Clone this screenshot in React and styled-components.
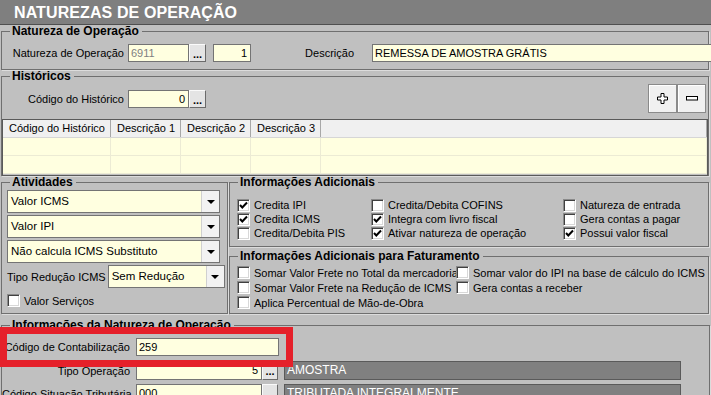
import React from "react";
import styled, { createGlobalStyle } from "styled-components";

const GlobalStyle = createGlobalStyle`
  html, body {
    margin: 0;
    padding: 0;
    background: #c0c0c0;
  }
  body {
    font-family: "Liberation Sans", Arial, sans-serif;
    font-size: 11px;
    color: #000;
  }
`;

const Window = styled.div`
  position: relative;
  width: 711px;
  height: 395px;
  overflow: hidden;
  background: #c0c0c0;
`;

const TitleBar = styled.div`
  height: 24px;
  background: #7f7f7f;
  border-bottom: 1px solid #4f4f4f;
  color: #fff;
  font-weight: bold;
  font-size: 16px;
  line-height: 25px;
  padding-left: 14px;
  letter-spacing: 0.1px;
`;

const Group = styled.fieldset`
  margin: ${(p) => p.$mt ?? 0}px ${(p) => p.$mr ?? 2}px 0 ${(p) => p.$ml ?? 1}px;
  padding: ${(p) => p.$pad || "0"};
  border: 1px solid #6f6f6f;
  border-bottom: ${(p) => (p.$noBottom ? "0" : "1px solid #6f6f6f")};
  box-shadow: 1px 1px 0 #dcdcdc;
  min-width: 0;
  width: ${(p) => (p.$w ? `${p.$w}px` : "auto")};
  flex-shrink: 0;
  height: ${(p) => (p.$h ? `${p.$h}px` : "auto")};
  box-sizing: border-box;
`;

const Legend = styled.legend`
  font-weight: bold;
  font-size: 12px;
  line-height: 12px;
  padding: 0 3px 0 2px;
  margin-left: ${(p) => p.$off ?? 8}px;
`;

const Row = styled.div`
  display: flex;
  align-items: center;
  margin-top: ${(p) => p.$mt ?? 0}px;
`;

const ButtonPair = styled.div`
  display: flex;
  margin-left: auto;
  margin-right: 2px;
`;

const Label = styled.span`
  flex-shrink: 0;
  width: ${(p) => (p.$w ? `${p.$w}px` : "auto")};
  text-align: right;
  margin-right: ${(p) => p.$mr ?? 4}px;
  white-space: nowrap;
`;

const Input = styled.div`
  flex-shrink: 0;
  box-sizing: border-box;
  width: ${(p) => p.$w}px;
  height: ${(p) => p.$h ?? 18}px;
  background: #ffffe0;
  border: 1px solid #747474;
  line-height: ${(p) => (p.$h ?? 18) - 2}px;
  padding: 0 3px 0 2px;
  text-align: ${(p) => (p.$right ? "right" : "left")};
  color: ${(p) => (p.$dim ? "#808080" : "#000")};
  white-space: nowrap;
  overflow: hidden;
  margin-right: ${(p) => p.$mr ?? 0}px;
`;

const DotsButton = styled.div`
  flex-shrink: 0;
  box-sizing: border-box;
  width: ${(p) => p.$w ?? 17}px;
  height: ${(p) => p.$h ?? 18}px;
  background: #e4e4e4;
  border: 1px solid;
  border-color: #fafafa #6a6a6a #6a6a6a #fafafa;
  font-weight: bold;
  font-size: 11px;
  line-height: 18px;
  text-align: center;
  margin-right: ${(p) => p.$mr ?? 0}px;
`;

const DarkField = styled.div`
  flex-shrink: 0;
  box-sizing: border-box;
  width: ${(p) => p.$w}px;
  height: 19px;
  background: #808080;
  border: 1px solid #5a5a5a;
  color: #fff;
  font-size: 12px;
  line-height: 17px;
  padding-left: 2px;
  white-space: nowrap;
`;

const SquareButton = styled.div`
  box-sizing: border-box;
  width: 29px;
  height: 29px;
  background: #f0f0f0;
  border: 1px solid #8a8a8a;
  box-shadow: inset 1px 1px 0 #ffffff;
  display: flex;
  align-items: center;
  justify-content: center;
`;

const Grid = styled.div`
  box-sizing: border-box;
  height: 57px;
  margin-top: 6px;
  border: 1px solid #5a5a5a;
  background: #c0c0c0;
  overflow: hidden;
`;

const GridRow = styled.div`
  display: flex;
  height: 17px;
  background: ${(p) => (p.$head ? "#f0f0f0" : "#ffffe0")};
  border-bottom: 1px solid ${(p) => (p.$head ? "#d6d6d6" : "#ecebd4")};
`;

const GridCell = styled.div`
  box-sizing: border-box;
  width: ${(p) => (p.$w ? `${p.$w}px` : "auto")};
  flex: ${(p) => (p.$w ? "0 0 auto" : "1")};
  border-right: 1px solid ${(p) => (p.$head ? "#a8a8a8" : "#ecebd4")};
  padding-left: 6px;
  line-height: 17px;
  white-space: nowrap;
`;

const Columns = styled.div`
  display: flex;
`;

const RightStack = styled.div`
  flex: 1;
  display: flex;
  flex-direction: column;
`;

const Combo = styled.div`
  box-sizing: border-box;
  display: flex;
  width: ${(p) => p.$w}px;
  height: 23px;
  background: #ffffe0;
  border: 1px solid #747474;
  margin-top: ${(p) => p.$mt ?? 0}px;
  flex-shrink: 0;
`;

const ComboText = styled.div`
  flex: 1;
  font-size: 11.5px;
  line-height: 21px;
  padding-left: 3px;
  white-space: nowrap;
`;

const ComboArrow = styled.div`
  width: 17px;
  background: #f2f2f2;
  border-left: 1px solid #d0d0d0;
  display: flex;
  align-items: center;
  justify-content: center;
  &::after {
    content: "";
    border-left: 4px solid transparent;
    border-right: 4px solid transparent;
    border-top: 4px solid #000;
  }
`;

const CheckGrid = styled.div`
  display: grid;
  grid-template-columns: ${(p) => p.$cols};
  grid-auto-rows: ${(p) => p.$rh}px;
`;

const CheckItem = styled.label`
  display: flex;
  align-items: center;
  gap: 4px;
  white-space: nowrap;
  font-size: 11px;
`;

const Box = styled.span`
  box-sizing: border-box;
  width: 13px;
  height: 13px;
  flex-shrink: 0;
  background: #fff;
  border: 1px solid;
  border-color: #8a8a8a #ffffff #ffffff #8a8a8a;
  box-shadow: inset 1px 1px 0 #404040, inset -1px -1px 0 #d8d8d8;
  display: flex;
  align-items: center;
  justify-content: center;
`;

const Highlight = styled.div`
  position: absolute;
  left: 0;
  top: 327px;
  width: 293px;
  height: 40px;
  box-sizing: border-box;
  border: 7px solid #e5202a;
  pointer-events: none;
`;

const Check = ({ on, children }) => (
  <CheckItem>
    <Box>
      {on && (
        <svg width="9" height="9" viewBox="0 0 9 9">
          <path d="M1 4 L3.3 6.5 L8 1.5" fill="none" stroke="#000" strokeWidth="2" />
        </svg>
      )}
    </Box>
    {children}
  </CheckItem>
);

const Select = ({ w, mt, children }) => (
  <Combo $w={w} $mt={mt}>
    <ComboText>{children}</ComboText>
    <ComboArrow />
  </Combo>
);

export default function App() {
  return (
    <>
      <GlobalStyle />
      <Window>
        <TitleBar>NATUREZAS DE OPERAÇÃO</TitleBar>

        <Group $pad="7px 0 7px 0">
          <Legend>Natureza de Operação</Legend>
          <Row>
            <Label $w={122}>Natureza de Operação</Label>
            <Input $w={61} $dim>6911</Input>
            <DotsButton $mr={7}>...</DotsButton>
            <Input $w={38} $right>1</Input>
            <Label $w={103} $mr={18}>Descrição</Label>
            <Input $w={345}>REMESSA DE AMOSTRA GRÁTIS</Input>
          </Row>
        </Group>

        <Group $pad="2px 0 0 0" $noBottom>
          <Legend>Históricos</Legend>
          <Row>
            <Label $w={122}>Código do Histórico</Label>
            <Input $w={61} $right>0</Input>
            <DotsButton>...</DotsButton>
            <ButtonPair>
              <SquareButton>
                <svg width="11" height="11" viewBox="0 0 11 11">
                  <path d="M4 .5 H7 V4 H10.5 V7 H7 V10.5 H4 V7 H.5 V4 H4 Z" fill="#fff" stroke="#000" />
                </svg>
              </SquareButton>
              <SquareButton>
                <svg width="12" height="5" viewBox="0 0 12 5">
                  <rect x=".5" y=".5" width="11" height="3.5" fill="#fff" stroke="#000" />
                </svg>
              </SquareButton>
            </ButtonPair>
          </Row>
          <Grid>
            <GridRow $head>
              <GridCell $head $w={108}>Código do Histórico</GridCell>
              <GridCell $head $w={70}>Descrição 1</GridCell>
              <GridCell $head $w={70}>Descrição 2</GridCell>
              <GridCell $head $w={70}>Descrição 3</GridCell>
              <GridCell $head />
            </GridRow>
            {[0, 1].map((i) => (
              <GridRow key={i}>
                <GridCell $w={108} />
                <GridCell $w={70} />
                <GridCell $w={70} />
                <GridCell $w={70} />
                <GridCell />
              </GridRow>
            ))}
          </Grid>
        </Group>

        <Columns>
          <Group $ml={1} $mr={1} $w={227} $pad="2px 0 0 5px" $h={138}>
            <Legend $off={3}>Atividades</Legend>
            <Select w={213}>Valor ICMS</Select>
            <Select w={213} mt={2}>Valor IPI</Select>
            <Select w={213} mt={2}>Não calcula ICMS Substituto</Select>
            <Row $mt={2}>
              <Label $mr={2}>Tipo Redução ICMS</Label>
              <Select w={117}>Sem Redução</Select>
            </Row>
            <Row $mt={6}>
              <Check>Valor Serviços</Check>
            </Row>
          </Group>

          <RightStack>
            <Group $ml={0} $mr={2} $pad="10px 0 5px 7px" $h={71}>
              <Legend $off={1}>Informações Adicionais</Legend>
              <CheckGrid $cols="134px 192px 1fr" $rh={14}>
                <Check on>Credita IPI</Check>
                <Check>Credita/Debita COFINS</Check>
                <Check>Natureza de entrada</Check>
                <Check on>Credita ICMS</Check>
                <Check on>Integra com livro fiscal</Check>
                <Check>Gera contas a pagar</Check>
                <Check>Credita/Debita PIS</Check>
                <Check on>Ativar natureza de operação</Check>
                <Check on>Possui valor fiscal</Check>
              </CheckGrid>
            </Group>
            <Group $ml={0} $mr={2} $mt={3} $pad="3px 0 0 7px" $h={64}>
              <Legend $off={1}>Informações Adicionais para Faturamento</Legend>
              <CheckGrid $cols="219px 1fr" $rh={15}>
                <Check>Somar Valor Frete no Total da mercadoria</Check>
                <Check>Somar valor do IPI na base de cálculo do ICMS</Check>
                <Check>Somar Valor Frete na Redução de ICMS</Check>
                <Check>Gera contas a receber</Check>
                <Check>Aplica Percentual de Mão-de-Obra</Check>
              </CheckGrid>
            </Group>
          </RightStack>
        </Columns>

        <Group $pad="7px 0 0 0" $mr={1} $mt={5}>
          <Legend>Informações da Natureza de Operação</Legend>
          <Row>
            <Label $w={128} $mr={6}>Código de Contabilização</Label>
            <Input $w={143}>259</Input>
          </Row>
          <Row $mt={5}>
            <Label $w={128} $mr={6}>Tipo Operação</Label>
            <Input $w={126} $h={19} $right>5</Input>
            <DotsButton $w={16} $h={19} $mr={6}>...</DotsButton>
            <DarkField $w={397}>AMOSTRA</DarkField>
          </Row>
          <Row $mt={4}>
            <Label $w={128} $mr={6}>Código Situação Tributária</Label>
            <Input $w={126} $h={19}>000</Input>
            <DotsButton $w={16} $h={19} $mr={6} />
            <DarkField $w={397}>TRIBUTADA INTEGRALMENTE</DarkField>
          </Row>
        </Group>

        <Highlight />
      </Window>
    </>
  );
}
